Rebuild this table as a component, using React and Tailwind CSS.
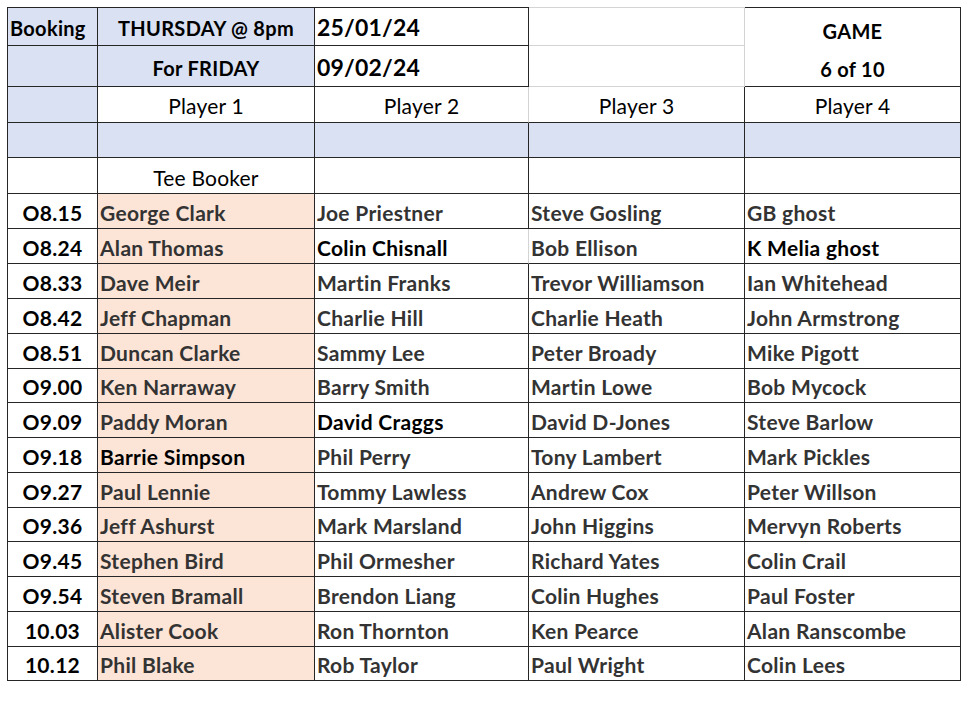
const dark = 'border-[#262626]';

const rows = [
  ['O8.15', 'George Clark', 'Joe Priestner', 'Steve Gosling', 'GB ghost'],
  ['O8.24', 'Alan Thomas', 'Colin Chisnall', 'Bob Ellison', 'K Melia ghost'],
  ['O8.33', 'Dave Meir', 'Martin Franks', 'Trevor Williamson', 'Ian Whitehead'],
  ['O8.42', 'Jeff Chapman', 'Charlie Hill', 'Charlie Heath', 'John Armstrong'],
  ['O8.51', 'Duncan Clarke', 'Sammy Lee', 'Peter Broady', 'Mike Pigott'],
  ['O9.00', 'Ken Narraway', 'Barry Smith', 'Martin Lowe', 'Bob Mycock'],
  ['O9.09', 'Paddy Moran', 'David Craggs', 'David D-Jones', 'Steve Barlow'],
  ['O9.18', 'Barrie Simpson', 'Phil Perry', 'Tony Lambert', 'Mark Pickles'],
  ['O9.27', 'Paul Lennie', 'Tommy Lawless', 'Andrew Cox', 'Peter Willson'],
  ['O9.36', 'Jeff Ashurst', 'Mark Marsland', 'John Higgins', 'Mervyn Roberts'],
  ['O9.45', 'Stephen Bird', 'Phil Ormesher', 'Richard Yates', 'Colin Crail'],
  ['O9.54', 'Steven Bramall', 'Brendon Liang', 'Colin Hughes', 'Paul Foster'],
  ['10.03', 'Alister Cook', 'Ron Thornton', 'Ken Pearce', 'Alan Ranscombe'],
  ['10.12', 'Phil Blake', 'Rob Taylor', 'Paul Wright', 'Colin Lees'],
];

// names typed in plain black rather than the grey text colour
const blackNames = ['Colin Chisnall', 'K Melia ghost', 'David Craggs', 'Barrie Simpson'];
// rows 6, 10 and 14 are a pixel shorter, as in the sheet
const shortRows = [5, 9, 13];

function Cell({ className = '', children }) {
  return (
    <div className={`flex items-end border-r border-b ${dark} ${className}`}>
      {children}
    </div>
  );
}

export default function App() {
  return (
    <div className="w-[979px] h-[703px] bg-white pt-[7px] pl-[7px]" style={{ fontFamily: 'Lato, "Open Sans", sans-serif' }}>
      <div className="grid grid-cols-[91px_217px_214px_216px_216px] grid-rows-[39px_41px_36px_35px_36px]">
        {/* row 1 */}
        <Cell className="border-t border-l bg-[#d9e1f2] pl-[2px] pb-[5px] text-[20px] tracking-[0.3px] font-bold text-black leading-[23px]">Booking</Cell>
        <Cell className="border-t bg-[#d9e1f2] justify-center pb-[5px] text-[20px] tracking-[0.3px] font-bold text-black leading-[23px]">THURSDAY @ 8pm</Cell>
        <Cell className="border-t pl-[2px] pb-[5px] text-[23px] tracking-[0.2px] font-bold text-black leading-[25px]">25/01/24</Cell>
        <Cell className="border-t border-t-[#d4d4d4] border-b-[#d4d4d4] border-r-[#d4d4d4]" />
        <div className={`row-span-2 border-t border-r border-b ${dark} flex flex-col items-center justify-end pb-[5px] text-[20px] tracking-[0.3px] font-bold text-black leading-[23px]`}>
          <span className="mb-[15px]">GAME</span>
          <span>6 of 10</span>
        </div>

        {/* row 2 */}
        <Cell className="border-l bg-[#d9e1f2]" />
        <Cell className="bg-[#d9e1f2] justify-center pb-[6px] text-[20px] tracking-[0.3px] font-bold text-black leading-[23px]">For FRIDAY</Cell>
        <Cell className="pl-[2px] pb-[6px] text-[23px] tracking-[0.2px] font-bold text-black leading-[25px]">09/02/24</Cell>
        <Cell className="border-r-[#d4d4d4] border-b-[#d4d4d4]" />

        {/* row 3 */}
        <Cell className="border-l bg-[#d9e1f2]" />
        {['Player 1', 'Player 2', 'Player 3', 'Player 4'].map((p, i) => (
          <Cell
            key={p}
            className={`justify-center pb-[5px] text-[21px] tracking-[0.2px] text-black leading-[23px] ${i === 1 ? 'border-r-[#d4d4d4]' : ''}`}
          >
            {p}
          </Cell>
        ))}

        {/* row 4 */}
        <Cell className="border-l bg-[#d9e1f2]" />
        <Cell className="bg-[#d9e1f2]" />
        <Cell className="bg-[#d9e1f2]" />
        <Cell className="bg-[#d9e1f2]" />
        <Cell className="bg-[#d9e1f2]" />

        {/* row 5 */}
        <Cell className="border-l" />
        <Cell className="justify-center pb-[4px] text-[21px] tracking-[0.2px] text-black leading-[23px]">Tee Booker</Cell>
        <Cell />
        <Cell />
        <Cell />
      </div>

      <div className="grid grid-cols-[91px_217px_214px_216px_216px]">
        {rows.flatMap((r, ri) =>
          r.map((v, ci) => {
            const color = ci === 0 || blackNames.includes(v) ? 'text-black' : 'text-[#333333]';
            const h = shortRows.includes(ri) ? 'h-[34px]' : 'h-[35px]';
            const extra =
              ci === 0
                ? 'border-l justify-center'
                : ci === 1
                  ? 'bg-[#fce4d6] pl-[2px]'
                  : ri === 1 && ci === 2
                    ? 'pl-[2px] border-r-[#d4d4d4]'
                    : 'pl-[2px]';
            return (
              <Cell
                key={`${ri}-${ci}`}
                className={`${h} ${extra} ${color} pb-[4px] text-[21px] tracking-[0.3px] font-bold leading-[23px] whitespace-nowrap`}
              >
                {v}
              </Cell>
            );
          })
        )}
      </div>
    </div>
  );
}
